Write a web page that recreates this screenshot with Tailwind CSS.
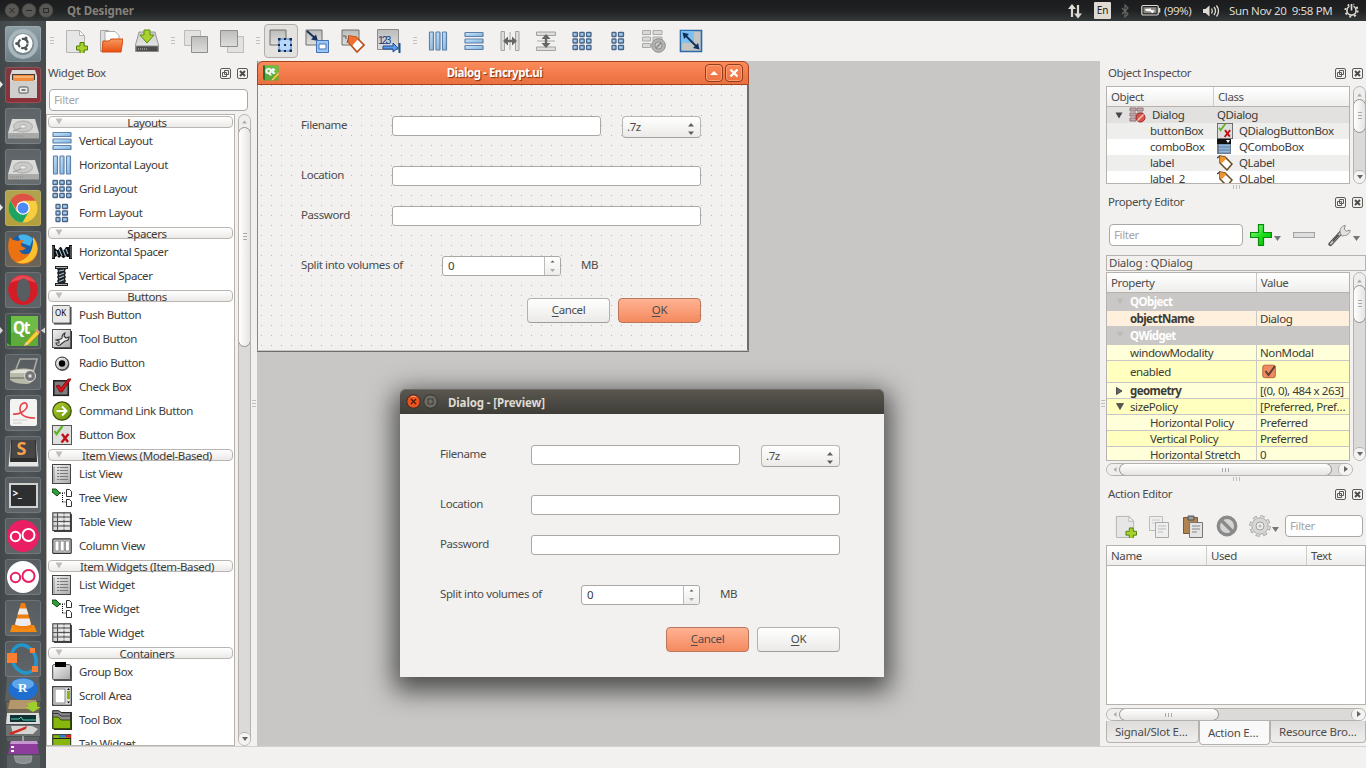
<!DOCTYPE html>
<html lang="en">
<head>
<meta charset="utf-8">
<title>Qt Designer</title>
<script src="https://cdn.jsdelivr.net/npm/@tailwindcss/browser@4"></script>
</head>
<body class="w-[1366px] h-[768px] overflow-hidden flex flex-col bg-[#f2f1f0] text-[#4c4c4c] font-['Noto_Sans','Open_Sans',sans-serif] text-[11.5px] leading-4 tracking-[-0.4px] whitespace-nowrap">

<svg class="absolute w-0 h-0">
  <defs>
    <linearGradient id="blue" x1="0" y1="0" x2="1" y2="1"><stop offset="0" stop-color="#cfeaff"/><stop offset="1" stop-color="#79add9"/></linearGradient>
    <linearGradient id="grey" x1="0" y1="0" x2="1" y2="1"><stop offset="0" stop-color="#f4f4f4"/><stop offset="1" stop-color="#a9a9a9"/></linearGradient>
    <linearGradient id="sq" x1="0" y1="0" x2="0" y2="1"><stop offset="0" stop-color="#bcbcba"/><stop offset="1" stop-color="#dededc"/></linearGradient>
    <linearGradient id="org" x1="0" y1="0" x2="0" y2="1"><stop offset="0" stop-color="#f79a5e"/><stop offset="1" stop-color="#ea4f13"/></linearGradient>
    <linearGradient id="grn" x1="0" y1="0" x2="1" y2="1"><stop offset="0" stop-color="#b8d432"/><stop offset="1" stop-color="#5d8a06"/></linearGradient>
    <linearGradient id="plusg" x1="0" y1="0" x2="1" y2="1"><stop offset="0" stop-color="#b4ffa8"/><stop offset=".5" stop-color="#1fe01f"/><stop offset="1" stop-color="#05b305"/></linearGradient>
    <linearGradient id="disk" x1="0" y1="0" x2="0" y2="1"><stop offset="0" stop-color="#c9c9c9"/><stop offset="1" stop-color="#f2f2f2"/></linearGradient>
  </defs>
  <symbol id="i-vbars" viewBox="0 0 20 20"><g fill="url(#blue)" stroke="#5f80a8" stroke-width="1.2"><rect x="1.5" y="1" width="4" height="18" rx=".6"/><rect x="8" y="1" width="4" height="18" rx=".6"/><rect x="14.5" y="1" width="4" height="18" rx=".6"/></g></symbol>
  <symbol id="i-hbars" viewBox="0 0 20 20"><g fill="url(#blue)" stroke="#5f80a8" stroke-width="1.2"><rect x="1" y="1.5" width="18" height="4" rx=".6"/><rect x="1" y="8" width="18" height="4" rx=".6"/><rect x="1" y="14.5" width="18" height="4" rx=".6"/></g></symbol>
  <symbol id="i-grid" viewBox="0 0 20 20"><g fill="url(#blue)" stroke="#4a6488" stroke-width="1.3"><rect x="1" y="1.5" width="4.4" height="4" rx=".6"/><rect x="7.8" y="1.5" width="4.4" height="4" rx=".6"/><rect x="14.6" y="1.5" width="4.4" height="4" rx=".6"/><rect x="1" y="8" width="4.4" height="4" rx=".6"/><rect x="7.8" y="8" width="4.4" height="4" rx=".6"/><rect x="14.6" y="8" width="4.4" height="4" rx=".6"/><rect x="1" y="14.5" width="4.4" height="4" rx=".6"/><rect x="7.8" y="14.5" width="4.4" height="4" rx=".6"/><rect x="14.6" y="14.5" width="4.4" height="4" rx=".6"/></g></symbol>
  <symbol id="i-form" viewBox="0 0 20 20"><g fill="url(#blue)" stroke="#4a6488" stroke-width="1.3"><rect x="4" y="1.5" width="4" height="4" rx=".6"/><rect x="10.5" y="1.5" width="5" height="4" rx=".6"/><rect x="4" y="8" width="4" height="4" rx=".6"/><rect x="10.5" y="8" width="5" height="4" rx=".6"/><rect x="4" y="14.5" width="4" height="4" rx=".6"/><rect x="10.5" y="14.5" width="5" height="4" rx=".6"/></g></symbol>
  <symbol id="i-hspace" viewBox="0 0 20 20"><path d="M0 3h3v3l2 2h1l2-3h1l2 3h1l2-3h1l2 0V3h3v14h-3v-2h-2l-1-1-2 2h-1l-2-2-2 2H7l-2-2-2 1v2H0z" fill="#111"/><path d="M1 4v12M19 4v12" stroke="#888"/><path d="M4 9l2 5M7 7l3 7M10.500 7l3 7M14 7l2 5" stroke="#9cc3d8" stroke-width="1.100"/></symbol>
  <symbol id="i-vspace" viewBox="0 0 20 20"><path d="M3 0h13v3h-2l-1 2 1 2-1 2 1 2-1 2 1 2-1 2h3v3H3v-3h3l-1-2 1-2-1-2 1-2-1-2 1-2-1-2H3z" fill="#222"/><path d="M4 1.500h11M4 18.500h11" stroke="#aaa"/><path d="M7 5l5-1M7 9l5-2M7 12l5-2M7 15.500l5-2" stroke="#9cc3d8" stroke-width="1.200"/></symbol>
  <symbol id="i-push" viewBox="0 0 20 20"><path d="M2 2h17.500v17.500H2z" fill="#333"/><rect x=".5" y=".5" width="17.500" height="17.500" rx="1" fill="#e9e9e9" stroke="#777"/></symbol>
  <symbol id="i-tool" viewBox="0 0 20 20"><path d="M2 2h18v18H2z" fill="#333"/><rect x=".5" y=".5" width="18" height="18" fill="url(#grey)" stroke="#555"/><path d="M4 11c2-1 5 0 6-2 0-2 0-4 3-5l-1 3 2 2 3-1c0 3-2 4-4 4l-5 4c-2 1-4 0-4-2l3 0 0-2z" fill="#eee" stroke="#333" stroke-width="1.100"/></symbol>
  <symbol id="i-radio" viewBox="0 0 20 20"><circle cx="10.500" cy="11" r="7" fill="#777"/><circle cx="10" cy="10.500" r="6.500" fill="url(#grey)" stroke="#333"/><circle cx="10" cy="10.500" r="3.200" fill="#000"/></symbol>
  <symbol id="i-check" viewBox="0 0 20 20"><rect x="1.800" y="3.800" width="14.500" height="14.500" fill="#7e7e7e" stroke="#222" stroke-width="1.600"/><path d="M4 9l3-1 2 3 7-9 3 0-9 13-2 0z" fill="#d8121a" stroke="#7d080c" stroke-width=".8"/></symbol>
  <symbol id="i-cmd" viewBox="0 0 20 20"><circle cx="10" cy="10" r="9.200" fill="url(#grn)" stroke="#40520a" stroke-width="1.300"/><path d="M4.500 10H14M10 5.500l4.500 4.500L10 14.500" fill="none" stroke="#fff" stroke-width="2"/></symbol>
  <symbol id="i-bbox" viewBox="0 0 20 20"><rect x=".5" y=".5" width="19" height="19" fill="#dedede" stroke="#555"/><path d="M2.500 6l2 3 6-8" fill="none" stroke="#5cb522" stroke-width="2.200"/><path d="M10 9l6 8M16.500 9l-7 8.500" stroke="#c01116" stroke-width="2.400"/></symbol>
  <symbol id="i-list" viewBox="0 0 20 20"><rect x=".5" y=".5" width="18" height="19" fill="url(#grey)" stroke="#444"/><path d="M2 2.500v16" stroke="#888"/><path d="M5 3.500h11M5 6.500h11M5 9.500h11M5 12.500h11M5 15.500h11" stroke="#7a7a7a" stroke-dasharray="2 .7 9 1"/></symbol>
  <symbol id="i-tree" viewBox="0 0 20 20"><path d="M0 1l4 0 4 4-3 3-5-4z" fill="#2f9e38" stroke="#0c3d11" stroke-width=".9"/><path d="M8 5h6M10.500 5v9M10.500 14h4" fill="none" stroke="#000" stroke-dasharray="1 1"/><path d="M14.500 1.500h3l2 2v5h-5zM14.500 11.500h3l2 2v5h-5z" fill="#fff" stroke="#333"/></symbol>
  <symbol id="i-table" viewBox="0 0 20 20"><path d="M2 2h18v18H2z" fill="#444"/><rect x=".8" y=".8" width="17.800" height="17.800" fill="#d5d5d5" stroke="#333"/><path d="M5.500 1v17M12 1v17M1 5h17M1 9.500h17M1 14h17" stroke="#555"/><path d="M7 3h10M7 7h10M7 11.700h10M7 16h10" stroke="#f8f8f8"/></symbol>
  <symbol id="i-col" viewBox="0 0 20 20"><rect x=".8" y="2.800" width="18.400" height="14.600" rx="1" fill="#ccc" stroke="#333" stroke-width="1.200"/><path d="M3 5h4v10H3zM8.200 5h4v10h-4zM13.400 5h4v10h-4z" fill="#fff" stroke="#777" stroke-width=".8"/></symbol>
  <symbol id="i-group" viewBox="0 0 20 20"><path d="M2 4h18v15H2z" fill="#555"/><rect x=".7" y="2.700" width="17.800" height="15" rx="1" fill="url(#grey)" stroke="#444"/><rect x="3" y="0" width="11" height="5" fill="#000"/></symbol>
  <symbol id="i-scroll" viewBox="0 0 20 20"><rect x=".7" y=".7" width="18.600" height="18.600" fill="#ddd" stroke="#333" stroke-width="1.200"/><rect x="3" y="3" width="10" height="14" fill="#fff" stroke="#888"/><path d="M15 5h3v8h-3z" fill="#86b80d"/><path d="M15 4l1.500-2L18 4zM15 15.500l1.500 2 1.500-2z" fill="#111"/></symbol>
  <symbol id="i-toolbox" viewBox="0 0 20 20"><path d="M2 2h18v18H2z" fill="#333"/><path d="M.7.7h6l3 2h9v16H.7z" fill="#8b8b8b" stroke="#222"/><path d="M1 7h5l3 3h9.500v8.500H1z" fill="#87b60c" stroke="#375003"/><path d="M1 3.500h5l3 2.500h9" stroke="#333" fill="none"/></symbol>
  <symbol id="i-tab" viewBox="0 0 20 20"><rect x=".7" y=".7" width="18" height="18" fill="#87b60c" stroke="#222"/><path d="M7 1h6v2.500H7z" fill="#2480d8"/><path d="M13.500 1H19v2.500h-5.500z" fill="#d82424"/><path d="M1 4.500h18" stroke="#222"/></symbol>
  <symbol id="i-float" viewBox="0 0 11 11"><rect x=".5" y=".5" width="10" height="10" rx="1.500" fill="none" stroke="#5b5b58"/><path d="M4.500 2.500h4v4h-4zM2.500 4.500h4v4h-4z" fill="#f2f1f0" stroke="#5b5b58"/></symbol>
  <symbol id="i-close" viewBox="0 0 11 11"><rect x=".5" y=".5" width="10" height="10" rx="1.500" fill="none" stroke="#5b5b58"/><path d="M3 3l5 5M8 3l-5 5" stroke="#4a4a48" stroke-width="1.900"/></symbol>
  <symbol id="i-new" viewBox="0 0 24 24"><path d="M2.500 1.500h13l5 5v17h-18z" fill="#e6e6e6" stroke="#b4b4b2"/><path d="M15.500 1.500v5h5z" fill="#fff" stroke="#b4b4b2"/><path d="M16 13.500h4v3.500h3.500v4H20v3.500h-4V21h-3.500v-4H16z" fill="#a9d22c" stroke="#4f8008"/></symbol>
  <symbol id="i-undo-d" viewBox="0 0 24 24"><path d="M.5 1.500h16v15H.5z" fill="#e2e2e0" stroke="#bcbcba"/><path d="M7.500 7.500h16v16h-16z" fill="url(#sq)" stroke="#8e8e8c"/></symbol>
  <symbol id="i-wrench" viewBox="0 0 24 24"><path d="M2.500 21.500l11-12" stroke="#555" stroke-width="4.200" stroke-linecap="round"/><path d="M3 21L13.500 9.500" stroke="#c5c5c5" stroke-width="2" stroke-linecap="round"/><path d="M5 18.500L11 12" stroke="#444" stroke-width="1.400"/><path d="M13 10.500c-1-4 0-7.500 5-8.500l-1 4 2 2 4-1c0 4-4 6-7 5.500l-1 1z" fill="#e2e2e2" stroke="#888"/></symbol>
  <symbol id="i-tag" viewBox="0 0 16 16"><path d="M0 3l3-2" stroke="#333" stroke-width="1.300" fill="none"/><path d="M3 1l5 1 7 7-5 6-7-7z" fill="#fff" stroke="#6b4a23" stroke-width="1.500"/><path d="M3 1l5 1 1 2-4 4-2-1z" fill="#f0942f"/></symbol>
  <symbol id="i-drive" viewBox="0 0 36 36"><path d="M7 11h23l4 14v5H3v-5z" fill="#d9d9d7"/><path d="M3 25h31v5.500H3z" fill="#a9a9a7"/><ellipse cx="18" cy="18.500" rx="9.500" ry="5.500" fill="#c9c9c7" stroke="#aaa"/><ellipse cx="18" cy="18.500" rx="3" ry="1.700" fill="#eee" stroke="#999" stroke-width=".6"/><path d="M8 23l8-3" stroke="#999"/><path d="M5 28h14" stroke="#888" stroke-dasharray="1 1"/></symbol>
  <symbol id="i-qt" viewBox="0 0 36 36"><path d="M2 3h31v30H2z" fill="#5eab3c"/><path d="M2 3h31v15C22 16 12 20 2 20z" fill="#6fbb47"/><path d="M2 3h4v30l-4-3z" fill="#276e2b"/><path d="M21 29l10-11 3 3-10 10-5 2z" fill="#f6d136" stroke="#b98a10" stroke-width=".7"/><path d="M30 17l2-1 3 3-1.500 2z" fill="#ef9a8c"/><path d="M21 29l-2 4 5-2z" fill="#e6d1a8"/></symbol>
</svg>

<!-- top panel -->
<header class="h-[21px] shrink-0 flex items-center bg-linear-to-b from-[#1c1c1d] via-[#1f2122] to-[#36393a] text-[#dfdbd2]">
  <svg class="w-[56px] h-[21px] shrink-0" viewBox="0 0 56 21"><g fill="#595854" stroke="#3e3d3a" stroke-width=".8"><circle cx="12" cy="10.500" r="7"/><circle cx="29" cy="10.500" r="7"/><circle cx="46" cy="10.500" r="7"/></g><path d="M9.500 8l5 5M14.500 8l-5 5M26 10.500h6M43.500 8.500h5v4h-5z" stroke="#2a2a28" fill="none"/></svg>
  <span class="ml-[11px] font-bold text-[#85827b] tracking-[-0.15px]">Qt Designer</span>
  <svg class="ml-auto w-[16px] h-[16px]" viewBox="0 0 16 16"><path d="M5 14V4M11 2v10" stroke="#dfdbd2" stroke-width="2.200"/><path d="M1 6l4-5 4 5zM7 10.500l4 5 4-5z" fill="#dfdbd2"/></svg>
  <span class="ml-[11px] w-[17px] h-[17px] bg-[#dfdbd2] rounded-[1px] text-[#222] text-[10px] leading-[17px] text-center tracking-normal">En</span>
  <svg class="ml-[9px] w-[10px] h-[14px]" viewBox="0 0 10 14"><path d="M2 4l6 6-3 3V1l3 3-6 6" fill="none" stroke="#666663" stroke-width="1.200"/></svg>
  <svg class="ml-[11px] w-[20px] h-[13px]" viewBox="0 0 20 13"><rect x=".8" y="1.500" width="16.500" height="9.500" rx="1.500" fill="none" stroke="#dfdbd2" stroke-width="1.200"/><rect x="2.500" y="3.200" width="13" height="6" fill="#8b8984"/><path d="M18.500 4v4.500" stroke="#dfdbd2" stroke-width="1.600"/><path d="M4 5l6-.5v1.500l4 .5-3 3-1-2-5-.5z" fill="#fff"/></svg>
  <span class="ml-[3px] w-[29px] tracking-[-0.5px]">(99%)</span>
  <svg class="ml-[10px] w-[17px] h-[14px]" viewBox="0 0 17 14"><path d="M0 5h2.500L6.500 1.500v11L2.500 9H0z" fill="#dfdbd2"/><path d="M8.500 4.500q1.500 2.500 0 5M11 3q3 4 0 8M13.500 1.500q4 5.500 0 11" fill="none" stroke="#dfdbd2" stroke-width="1.300"/></svg>
  <span class="ml-[9px] w-[104px] tracking-[-0.36px]">Sun Nov 20&nbsp; 9:58 PM</span>
  <svg class="ml-[11px] mr-[7px] w-[15px] h-[15px]" viewBox="0 0 15 15"><circle cx="7.500" cy="7.500" r="4.600" fill="none" stroke="#dfdbd2" stroke-width="1.600"/><circle cx="7.500" cy="7.500" r="6.200" fill="none" stroke="#dfdbd2" stroke-width="1.800" stroke-dasharray="2 2.870"/><path d="M7.500 0v8" stroke="#1f2122" stroke-width="4"/><path d="M7.500 1v6.500" stroke="#dfdbd2" stroke-width="1.700"/></svg>
</header>

<div class="flex-1 min-h-0 flex">

<!-- launcher -->
<nav class="relative w-[46px] shrink-0 bg-linear-to-r from-[#42474a] via-[#4f5457] to-[#464b4d] flex flex-col items-center gap-[5px] pt-[5px] pr-[1px] overflow-hidden [&>div]:w-[36px] [&>div]:h-[36px] [&>div]:shrink-0 [&>div]:rounded-[3px] [&>div]:shadow-[inset_0_0_0_1px_#ffffff22]">
  <div class="bg-linear-to-b from-[#8fa0a7] to-[#6d7d84]"><svg viewBox="0 0 36 36"><circle cx="18" cy="18" r="13" fill="none" stroke="#a9b6bb" stroke-width="4"/><circle cx="18" cy="17.500" r="9.500" fill="#fff"/><circle cx="18" cy="17.500" r="4.600" fill="none" stroke="#4d5659" stroke-width="2.200" stroke-dasharray="8.300 1.330" transform="rotate(8 18 17.500)"/><g fill="#4d5659"><circle cx="11.800" cy="17.500" r="1.600"/><circle cx="21" cy="12" r="1.600"/><circle cx="21" cy="23" r="1.600"/></g></svg></div>
  <div class="bg-linear-to-b from-[#7d3a40] to-[#8c3039]"><svg viewBox="0 0 36 36"><path d="M7 3h23l2 6v22H5V9z" fill="#d9d9d7"/><path d="M7 7h23v6H7z" fill="#413c37"/><path d="M8 8h21v6H8z" fill="#f28b3c"/><path d="M9 10h19" stroke="#fbd7a8"/><path d="M5 14h27v17H5z" fill="#cfcfcd"/><rect x="14" y="20" width="9" height="6" rx="1" fill="#eee" stroke="#555"/><path d="M16.500 23h4" stroke="#555" stroke-width="1.500"/></svg></div>
  <div class="bg-linear-to-b from-[#5d6366] to-[#686e70]"><svg viewBox="0 0 36 36"><use href="#i-drive"/></svg></div>
  <div class="bg-linear-to-b from-[#5d6366] to-[#686e70]"><svg viewBox="0 0 36 36"><use href="#i-drive"/></svg></div>
  <div class="bg-linear-to-b from-[#b0a351] to-[#b39f3c]"><svg viewBox="0 0 36 36"><circle cx="18" cy="18" r="14.500" fill="#f6cd3c"/><path d="M5.400 10.800A14.500 14.500 0 0 1 30.600 10.800H18L13 22z" fill="#de5246"/><path d="M5.400 10.800A14.500 14.500 0 0 0 17.500 32.500L23.500 22H12z" fill="#1da462"/><circle cx="18" cy="18" r="6.800" fill="#fff"/><circle cx="18" cy="18" r="5.500" fill="#4c8bf5"/></svg></div>
  <div class="bg-linear-to-b from-[#565c5f] to-[#6c6457]"><svg viewBox="0 0 36 36"><circle cx="18" cy="17" r="13.500" fill="#1b5ea8"/><path d="M13 5c5-3 12-1 15 3l-3 7-8-3z" fill="#45b4ea"/><path d="M5 6c-4 9-2 27 13 27 10 0 15-8 15-16-1-5-2-8-5-11 2 6 2 10-1 14-4 5-11 4-13-1 3 1 5 0 7-2-2-1-4-1-5-3 0-3 2-3 3-5-3 0-5 0-6 1-3-1-5 0-8-4z" fill="#ec7211"/><path d="M28 6c6 7 6 17-1 23-5 4-11 4-16 2 9-1 18-8 17-25z" fill="#fbc030"/></svg></div>
  <div class="bg-linear-to-b from-[#565c5f] to-[#5f6568]"><svg viewBox="0 0 36 36"><ellipse cx="18" cy="18" rx="14.800" ry="15" fill="#d41b26"/><path d="M5 11a14.800 15 0 0 1 26 0c-8-4-18-4-26 0z" fill="#ec4450"/><ellipse cx="18.500" cy="18" rx="7" ry="11.500" fill="#575d60"/></svg></div>
  <div class="relative bg-[#4f5456]"><svg viewBox="0 0 36 36"><use href="#i-qt"/></svg><span class="absolute left-[8px] top-[5px] text-white font-bold text-[17px] leading-[20px] tracking-[-1.5px] scale-x-90 origin-left">Qt</span></div>
  <div class="bg-linear-to-b from-[#565c5f] to-[#5f6568]"><svg viewBox="0 0 36 36"><path d="M11 15L15 5h17l-5 18" fill="none" stroke="#a9a9a5" stroke-width="1.600"/><path d="M5 17c8-3 15-3 24-1v9c-2 4-5 5-8 5-6 0-12-1-16-4z" fill="#b9b9aa"/><path d="M5 18c8-3 15-3 22-1l-3 2H6z" fill="#e4e4d8"/><path d="M5 24h15" stroke="#7e7e72" stroke-width="1.500"/><circle cx="25" cy="22" r="5.500" fill="#777" stroke="#ddd"/><circle cx="25" cy="22" r="1.800" fill="#ddd"/></svg></div>
  <div class="bg-linear-to-b from-[#565c5f] to-[#5f6568]"><svg viewBox="0 0 36 36"><rect x="5" y="4" width="27" height="27" rx="2" fill="#f3f3f2"/><path d="M8 19c6 1 15-4 14-9-1-4-7-2-7 4s6 9 15 9" fill="none" stroke="#e3444b" stroke-width="1.600"/><path d="M8 25h14M8 28h9" stroke="#ccc"/></svg></div>
  <div class="relative bg-linear-to-b from-[#565c5f] to-[#5f6568]"><svg viewBox="0 0 36 36"><path d="M6 4h25l2.500 26.500H3.500z" fill="#e5e5e5"/><path d="M6 4h25l1 22H5z" fill="#2e2e2e"/><path d="M7 4h23l.5 18h-24z" fill="#464646"/></svg><span class="absolute left-[12px] top-[1px] text-[#f7a24c] font-bold text-[18px] leading-[22px]">S</span></div>
  <div class="relative bg-linear-to-b from-[#565c5f] to-[#5f6568]"><svg viewBox="0 0 36 36"><rect x="5" y="7" width="27" height="23" fill="#2d2f30" stroke="#d0d0ce" stroke-width="2"/></svg><span class="absolute left-[8px] top-[8px] text-white text-[10px] leading-[16px] font-bold">&gt;_</span></div>
  <div class="bg-linear-to-b from-[#565c5f] to-[#5f6568]"><svg viewBox="0 0 36 36"><circle cx="18" cy="18" r="16" fill="#ea1e63"/><g fill="none" stroke="#fff" stroke-width="2"><circle cx="10.500" cy="18.500" r="4.700"/><circle cx="23.500" cy="17" r="6"/></g></svg></div>
  <div class="bg-linear-to-b from-[#565c5f] to-[#5f6568]"><svg viewBox="0 0 36 36"><circle cx="18" cy="18" r="16" fill="#fff"/><g fill="none" stroke="#ea1e63" stroke-width="2"><circle cx="10.500" cy="18.500" r="4.700"/><circle cx="23.500" cy="17" r="6"/></g></svg></div>
  <div class="bg-linear-to-b from-[#565c5f] to-[#5f6568]"><svg viewBox="0 0 36 36"><path d="M7 25h22l3 7H5z" fill="#f58a13"/><path d="M16 3h4l7 24c-4 3-14 3-18 0z" fill="#f07f12"/><path d="M14.500 8.500h7l2 6h-11zM11.500 18.500h13l1.500 6c-4 2-12 2-16 0z" fill="#ececec"/></svg></div>
  <div class="bg-linear-to-b from-[#565c5f] to-[#5f6568]"><svg viewBox="0 0 36 36"><ellipse cx="19" cy="18" rx="11.500" ry="14.500" fill="none" stroke="#2396cc" stroke-width="3.500" transform="rotate(-28 19 18)"/><g fill="#ff7f32"><path d="M2 12h10v10H2zM25 7h5v5h-5zM27 25h6v6h-6z"/></g></svg></div>
  <!-- folded stack -->
  <svg class="absolute left-[3px] top-[655px] w-[40px] h-[92px]" viewBox="0 0 40 92"><path d="M4 1h32l2 24H2z" fill="#5a6063"/><ellipse cx="20" cy="13" rx="14.500" ry="11" fill="#1f6fd0"/><ellipse cx="20" cy="8" rx="11" ry="5.500" fill="#5ea5ea"/><path d="M3 26h34l-1 12H4z" fill="#6d6655"/><path d="M7 24h26l2 9H5z" fill="#b3976b"/><path d="M24 27h4v-1h6v5h4l-8 5-8-5h4z" fill="#9ccf2b"/><path d="M4 37h32l1 11H3z" fill="#dcdcdc"/><path d="M7 39h26v7H7z" fill="#12302f"/><path d="M8 43h8l2-2 2 3h13" stroke="#4fd4c0" fill="none"/><path d="M3 49h34v11H3z" fill="#6e7273"/><path d="M8 50h21l6 3-5 5H10z" fill="#d4d4d2"/><path d="M6 57l18-7-1 3-15 6z" fill="#cf2b21"/><path d="M4 61h32v4H4z" fill="#5a5f62"/><path d="M20 60v6" stroke="#ddd"/><path d="M8 65h26l2 13H5z" fill="#8e3d9c"/><path d="M8 65h26l1 3H7z" fill="#c795d0"/><path d="M8 70h3v2H8zM8 74h3v2H8z" fill="#fff"/><path d="M4 79h33v13H4z" fill="#5a5f62"/><path d="M11 80h18l-1 6c-5 2-11 2-15 0z" fill="#8a8f90" stroke="#aaa" stroke-width=".7"/></svg>
  <span class="absolute left-[18px] top-[659px] font-bold text-white text-[13px] leading-[16px] font-['Liberation_Serif',serif]">R</span>
  <svg class="absolute left-0 top-[59px] w-[4px] h-[132px]" viewBox="0 0 4 132"><path d="M0 1l3 3.500-3 3.500zM0 124l3 3.500-3 3.500z" fill="#e8e8e8"/></svg>
  <svg class="absolute left-0 top-[305px] w-[46px] h-[9px]" viewBox="0 0 46 9"><path d="M0 1l3 3.500-3 3.500zM45 1.500l-4 3 4 3z" fill="#d8d8d8"/></svg>
</nav>

<div class="flex-1 min-w-0 flex flex-col">
  <!-- toolbar -->
  <div class="h-[40px] shrink-0 flex items-center text-[#bbb] [&>svg]:w-[24px] [&>svg]:h-[24px] [&>svg]:shrink-0">
    <span class="ml-[4px] w-[4px] h-[9px] shrink-0 bg-[repeating-linear-gradient(#c4c2bf_0_1px,transparent_1px_3px)]"></span>
    <svg class="ml-[10px]"><use href="#i-new"/></svg>
    <svg class="ml-[11px]" viewBox="0 0 24 24"><path d="M1.500 1.500h8l2 3h-3v18h-7z" fill="#ddd" stroke="#a9a9a7"/><path d="M6 2.500h10l4 4V15H6z" fill="#fff" stroke="#aaa"/><path d="M4 12h6l2-2h12l-2 13H3z" fill="url(#org)" stroke="#cf4c10"/></svg>
    <svg class="ml-[12px]" viewBox="0 0 24 24"><path d="M4 3h16l3.500 13v6.500H.5V16z" fill="url(#disk)" stroke="#999"/><path d="M1 17h22v5.500H1z" fill="#4b4b4b" stroke="#888"/><path d="M3 20h10" stroke="#ccc" stroke-dasharray="1 1"/><path d="M9 1h6v5h4l-7 8-7-8h4z" fill="#a9d22c" stroke="#5a8d0c"/></svg>
    <span class="ml-[12px] w-[4px] h-[9px] shrink-0 bg-[repeating-linear-gradient(#c4c2bf_0_1px,transparent_1px_3px)]"></span>
    <svg class="ml-[9px]"><use href="#i-undo-d"/></svg>
    <svg class="ml-[12px]" viewBox="0 0 24 24"><path d="M7.500 7.500h16v16h-16z" fill="#e2e2e0" stroke="#bcbcba"/><path d="M.5 1.500h17v16H.5z" fill="url(#sq)" stroke="#8e8e8c"/></svg>
    <span class="ml-[12px] w-[4px] h-[9px] shrink-0 bg-[repeating-linear-gradient(#c4c2bf_0_1px,transparent_1px_3px)]"></span>
    <span class="ml-[4px] w-[34px] h-[34px] shrink-0 rounded-[4px] border border-[#b1afab] bg-[#e4e2df] flex items-center justify-center"><svg class="w-[24px] h-[24px]" viewBox="0 0 24 24"><path d="M1 1h16v15H1z" fill="url(#sq)" stroke="#6f6f6d"/><path d="M10 10h12v12H10z" fill="#b7d8fb" stroke="#4c7dc0"/><g fill="#0e2a55"><path d="M9 9h2.500v2.500H9zM15 9h2v2h-2zM20.500 9H23v2.500h-2.500zM9 15h2v2H9zM21 15h2v2h-2zM9 20.500h2.500V23H9zM15 21h2v2h-2zM20.500 20.500H23V23h-2.500zM15 15h2v2h-2z"/></g></svg></span>
    <svg class="ml-[7px]" viewBox="0 0 24 24"><path d="M1 1h16v15H1z" fill="url(#sq)" stroke="#6f6f6d"/><path d="M2 2l9 8" stroke="#16325c" stroke-width="2"/><path d="M13 12l-7-1.500 5-5z" fill="#16325c"/><path d="M11.500 11.500h12v12h-12z" fill="#9cc6f5" stroke="#4473b5"/><path d="M14 15h7v5h-7z" fill="#fff" stroke="#4473b5"/></svg>
    <svg class="ml-[12px]" viewBox="0 0 24 24"><path d="M1 1h17v15H1z" fill="url(#sq)" stroke="#6f6f6d"/><path d="M2 7h3v3M8 7l-2 7" stroke="#555" fill="none"/><path d="M8 7l7 1 8 8-7 7-8-9z" fill="#fff" stroke="#b94f1b" stroke-width="1.700"/><path d="M8 7l7 1 2 2-6 7-3-4z" fill="#f07030"/></svg>
    <svg class="ml-[12px]" viewBox="0 0 24 24"><path d="M.5.5h21v20H.5z" fill="url(#sq)" stroke="#8b8b89"/><text x="1" y="15" font-size="10.500" fill="#163f86" font-family="Liberation Sans" textLength="13">123</text><path d="M6 17h10v-3l5 5-5 4v-3H6z" fill="#5d9be6" stroke="#1d4d99"/><path d="M22.500 14v10" stroke="#1d4d99" stroke-width="2"/></svg>
    <span class="ml-[12px] w-[4px] h-[9px] shrink-0 bg-[repeating-linear-gradient(#c4c2bf_0_1px,transparent_1px_3px)]"></span>
    <svg class="ml-[9px]" viewBox="-2 -2 24 24"><use href="#i-vbars" width="20" height="20"/></svg>
    <svg class="ml-[12px]" viewBox="-2 -2 24 24"><use href="#i-hbars" width="20" height="20"/></svg>
    <svg class="ml-[12px]" viewBox="0 0 24 24"><path d="M3 2.500h3.500v19H3zM17.500 2.500H21v19h-3.500z" fill="#ddd" stroke="#a2a2a0"/><path d="M12 3v18" stroke="#aaa"/><path d="M7 12h10" stroke="#666" stroke-width="2.400"/><path d="M5 12l5-4.500v9zM19 12l-5-4.500v9z" fill="#666"/></svg>
    <svg class="ml-[12px]" viewBox="0 0 24 24"><path d="M2.500 3h19v3.500h-19zM2.500 18h19v3.500h-19z" fill="#ddd" stroke="#a2a2a0"/><path d="M3 12h18" stroke="#aaa"/><path d="M12 7v10" stroke="#666" stroke-width="2.400"/><path d="M12 5l-4.500 5h9zM12 19l-4.500-5h9z" fill="#666"/></svg>
    <svg class="ml-[12px]" viewBox="-2 -2 24 24"><use href="#i-grid" width="20" height="20"/></svg>
    <svg class="ml-[12px]" viewBox="-2 -2 24 24"><use href="#i-form" width="20" height="20"/></svg>
    <svg class="ml-[12px]" viewBox="0 0 24 24"><g fill="#d9d9d7" stroke="#aaaaa8"><path d="M.5 1.500h8v4h-8zM11 1.500h9v4h-9zM.5 8h8v4h-8zM11 8h9v4h-9zM.5 14.500h8v4h-8z"/></g><circle cx="16.500" cy="16.500" r="6.800" fill="#b4b4b2" stroke="#8d8d8b"/><circle cx="16.500" cy="16.500" r="3.600" fill="#c9c9c7" stroke="#8d8d8b"/><path d="M14 19l5-5" stroke="#8d8d8b" stroke-width="1.600"/></svg>
    <svg class="ml-[13px]" viewBox="0 0 24 24"><path d="M1.500 1.500h21v21h-21z" fill="#c5c5c3" stroke="#2a6ba8" stroke-width="1.600"/><path d="M2 2h13v12H2z" fill="#7ec0f2"/><path d="M5 5l14 14" stroke="#0f335c" stroke-width="1.800"/><path d="M3.500 3.500l6.500 1.500-5 5zM20.500 20.500l-6.500-1.500 5-5z" fill="#0f335c"/></svg>
  </div>

  <div class="h-[685px] shrink-0 flex">
    <!-- widget box -->
    <aside class="w-[211px] shrink-0 flex flex-col">
      <div class="h-[24px] flex items-center pl-[2px] pr-[9px] gap-[6px]"><span class="mr-auto">Widget Box</span><svg class="w-[11px] h-[11px]"><use href="#i-float"/></svg><svg class="w-[11px] h-[11px]"><use href="#i-close"/></svg></div>
      <div class="mt-[4px] ml-[3px] w-[199px] h-[22px] rounded-[4px] border border-[#aaa8a4] bg-white pl-[4px] leading-[20px] text-[#a6a6a6]">Filter</div>
      <div class="mt-[3px] flex h-[632px]">
        <div class="w-[189px] shrink-0 border-y border-r border-l border-[#b6b3af] bg-white overflow-hidden text-[#3c3b37] [&>h3]:mx-[1px] [&>h3]:mt-[2px] [&>h3]:mb-[1px] [&>h3]:h-[12px] [&>h3]:rounded-[4px] [&>h3]:border [&>h3]:border-[#b9b6b2] [&>h3]:bg-linear-to-b [&>h3]:from-white [&>h3]:to-[#ebeae8] [&>h3]:leading-[11px] [&>h3]:text-center [&>h3]:pl-[13px] [&>h3]:relative [&>p]:h-[24px] [&>p]:flex [&>p]:items-center [&>p]:pl-[5px] [&>p]:gap-[7px] [&_p>svg]:w-[20px] [&_p>svg]:h-[20px]">
          <h3 class="!mt-[1px]"><svg class="absolute left-[6px] top-[1px] w-[8px] h-[7px]" viewBox="0 0 8 7"><path d="M.5.5h7L4 6.500z" fill="#c0bdb9"/></svg>Layouts</h3>
          <p><svg><use href="#i-hbars"/></svg>Vertical Layout</p>
          <p><svg><use href="#i-vbars"/></svg>Horizontal Layout</p>
          <p><svg><use href="#i-grid"/></svg>Grid Layout</p>
          <p><svg><use href="#i-form"/></svg>Form Layout</p>
          <h3><svg class="absolute left-[6px] top-[1px] w-[8px] h-[7px]" viewBox="0 0 8 7"><path d="M.5.5h7L4 6.500z" fill="#c0bdb9"/></svg>Spacers</h3>
          <p><svg><use href="#i-hspace"/></svg>Horizontal Spacer</p>
          <p><svg><use href="#i-vspace"/></svg>Vertical Spacer</p>
          <h3><svg class="absolute left-[6px] top-[1px] w-[8px] h-[7px]" viewBox="0 0 8 7"><path d="M.5.5h7L4 6.500z" fill="#c0bdb9"/></svg>Buttons</h3>
          <p class="relative"><svg><use href="#i-push"/></svg><span class="absolute left-[8px] top-[3px] text-[8px] leading-[14px] tracking-normal text-black">OK</span>Push Button</p>
          <p><svg><use href="#i-tool"/></svg>Tool Button</p>
          <p><svg><use href="#i-radio"/></svg>Radio Button</p>
          <p><svg><use href="#i-check"/></svg>Check Box</p>
          <p><svg><use href="#i-cmd"/></svg>Command Link Button</p>
          <p><svg><use href="#i-bbox"/></svg>Button Box</p>
          <h3><svg class="absolute left-[6px] top-[1px] w-[8px] h-[7px]" viewBox="0 0 8 7"><path d="M.5.5h7L4 6.500z" fill="#c0bdb9"/></svg>Item Views (Model-Based)</h3>
          <p><svg><use href="#i-list"/></svg>List View</p>
          <p><svg><use href="#i-tree"/></svg>Tree View</p>
          <p><svg><use href="#i-table"/></svg>Table View</p>
          <p><svg><use href="#i-col"/></svg>Column View</p>
          <h3><svg class="absolute left-[6px] top-[1px] w-[8px] h-[7px]" viewBox="0 0 8 7"><path d="M.5.5h7L4 6.500z" fill="#c0bdb9"/></svg>Item Widgets (Item-Based)</h3>
          <p><svg><use href="#i-list"/></svg>List Widget</p>
          <p><svg><use href="#i-tree"/></svg>Tree Widget</p>
          <p><svg><use href="#i-table"/></svg>Table Widget</p>
          <h3><svg class="absolute left-[6px] top-[1px] w-[8px] h-[7px]" viewBox="0 0 8 7"><path d="M.5.5h7L4 6.500z" fill="#c0bdb9"/></svg>Containers</h3>
          <p><svg><use href="#i-group"/></svg>Group Box</p>
          <p><svg><use href="#i-scroll"/></svg>Scroll Area</p>
          <p><svg><use href="#i-toolbox"/></svg>Tool Box</p>
          <p><svg><use href="#i-tab"/></svg>Tab Widget</p>
        </div>
        <div class="ml-[3px] w-[13px] rounded-[7px] border border-[#b5b2ae] bg-[#dcdad8] flex flex-col items-center overflow-hidden">
          <span class="w-full h-[20px] -mb-[8px] bg-[#efeeec] flex justify-center pt-[5px]"><svg class="w-[5px] h-[4px]" viewBox="0 0 5 4"><path d="M0 3.500L2.500.5 5 3.500z" fill="#aaa"/></svg></span>
          <span class="w-[13px] h-[220px] shrink-0 rounded-[7px] border border-[#94918d] bg-linear-to-r from-white to-[#e6e4e2] flex items-center justify-center"><i class="w-[4px] h-[8px] bg-[repeating-linear-gradient(#aaa_0_1px,transparent_1px_3px)]"></i></span>
          <span class="mt-auto w-full h-[13px] border-t border-[#b5b2ae] rounded-t-[5px] bg-[#f4f3f2] flex justify-center pt-[4px]"><svg class="w-[6px] h-[4px]" viewBox="0 0 6 4"><path d="M0 0h6L3 4z" fill="#666"/></svg></span>
        </div>
        <div class="flex items-center pl-[1px]"><i class="w-[4px] h-[9px] -mt-[52px] bg-[repeating-linear-gradient(#c0beba_0_1px,transparent_1px_3px)]"></i></div>
      </div>
    </aside>

    <!-- form canvas -->
    <main class="relative w-[843px] shrink-0 bg-[#c8c7c6] overflow-hidden text-[#4c4c4c]">
      <section class="absolute left-0 top-0 w-[492px] h-[291px] flex flex-col border-b border-[#6e6d6b] shadow-[inset_1px_0_#8a8886]">
        <div class="h-[24px] shrink-0 rounded-t-[6px] border border-[#a5431d] bg-linear-to-b from-[#fa8b5b] from-0% via-[#f37b4b] via-55% to-[#e97140] flex items-center pl-[4px] pr-[5px] text-white font-bold">
          <span class="relative w-[18px] h-[18px]"><svg class="w-[18px] h-[18px]"><use href="#i-qt"/></svg><b class="absolute left-[3px] top-[1px] text-[9px] leading-[12px] tracking-[-1px]">Qt</b></span>
          <span class="flex-1 text-center pl-[4px] [text-shadow:1px_1px_1px_#7c3313] tracking-[-0.45px]">Dialog - Encrypt.ui</span>
          <span class="w-[18px] h-[18px] rounded-[4px] border border-[#933c1a] shadow-[inset_0_0_0_1px_#ff9d73]"><svg viewBox="0 0 16 16"><path d="M4 10h8L8 6z" fill="#fff"/></svg></span>
          <span class="ml-[2px] w-[18px] h-[18px] rounded-[4px] border border-[#933c1a] shadow-[inset_0_0_0_1px_#ff9d73]"><svg viewBox="0 0 16 16"><path d="M4.500 4.500l7 7M11.500 4.500l-7 7" stroke="#fff" stroke-width="2.300"/></svg></span>
        </div>
        <div class="flex-1 border-x border-b border-r-[#6e6d6b] border-l-[#8a8886] border-b-[#c9c7c5] border-r-2 pl-[43px] pt-[31px] bg-[#f2f1f0] bg-[radial-gradient(circle_at_0.5px_0.5px,#b9b8b6_0.6px,transparent_0.8px)] bg-[length:10px_10px] bg-[position:3px_0px]">
          <div class="flex h-[22px]"><span class="w-[91px] pt-[1px]">Filename</span><i class="w-[209px] h-[20px] rounded-[3px] border border-[#aaa8a4] bg-white"></i><span class="ml-[21px] w-[79px] h-[22px] rounded-[4px] border border-[#b8b6b2] border-b-[#a3a19d] bg-linear-to-b from-white to-[#ebeae8] flex items-center pl-[4px] pr-[6px] justify-between">.7z<svg class="w-[6px] h-[12px] mt-[3px]" viewBox="0 0 6 12"><path d="M0 3.500L3 0l3 3.500zM0 8.500h6L3 12z" fill="#5e5e5c"/></svg></span></div>
          <div class="mt-[28px] flex h-[20px]"><span class="w-[91px] pt-[1px]">Location</span><i class="w-[309px] h-[20px] rounded-[3px] border border-[#aaa8a4] bg-white"></i></div>
          <div class="mt-[20px] flex h-[20px]"><span class="w-[91px] pt-[1px]">Password</span><i class="w-[309px] h-[20px] rounded-[3px] border border-[#aaa8a4] bg-white"></i></div>
          <div class="mt-[30px] flex h-[20px]"><span class="w-[141px] pt-[1px]">Split into volumes of</span><span class="w-[119px] rounded-[3px] border border-[#aaa8a4] bg-white flex justify-between pl-[5px] leading-[18px] text-[#3c3b37]">0<b class="w-[16px] rounded-r-[3px] border-l border-[#bdbbb7] bg-linear-to-b from-white to-[#ececea] flex justify-center items-center"><svg class="w-[5px] h-[12px]" viewBox="0 0 5 12"><path d="M.5 2.500L2.500.5l2 2z" fill="#555"/><path d="M0 9h5l-2.500 3z" fill="#aaa"/></svg></b></span><span class="ml-[20px] pt-[1px]">MB</span></div>
          <div class="mt-[22px] ml-[226px] flex gap-[8px] text-center leading-[22px] [&>span]:w-[83px] [&>span]:h-[25px] [&>span]:rounded-[4px] [&>span]:border">
            <span class="border-[#b3b1ad] border-b-[#9f9d99] bg-linear-to-b from-white to-[#ebeae8]"><u class="underline-offset-2">C</u>ancel</span><span class="border-[#b9775c] bg-linear-to-b from-[#ffb293] to-[#f4895e]"><u class="underline-offset-2">O</u>K</span></div>
        </div>
      </section>

      <section class="absolute left-[143px] top-[328px] w-[484px] h-[288px] flex flex-col rounded-t-[6px] shadow-[0_8px_26px_6px_rgba(0,0,0,0.62)]">
        <div class="h-[25px] shrink-0 rounded-t-[6px] bg-linear-to-b from-[#5a5850] to-[#3e3d38] shadow-[inset_0_1px_#6d6b62] flex items-center pl-[6px]">
          <svg class="w-[34px] h-[16px]" viewBox="0 0 34 16"><circle cx="7.500" cy="7.500" r="6.700" fill="#e95420" stroke="#3a2a22"/><path d="M5 2.800a6 6 0 0 1 5 0" stroke="#f9a27c" fill="none"/><path d="M5 5l5 5M10 5l-5 5" stroke="#4a1d0c" stroke-width="1.200"/><circle cx="24.500" cy="7.500" r="6.700" fill="#6e6c65" stroke="#35342f"/><rect x="22" y="5" width="5" height="5" fill="none" stroke="#3b3a36"/></svg>
          <span class="ml-[8px] pt-[3px] font-bold text-[#dfdbd2] tracking-[-0.12px]">Dialog - [Preview]</span>
        </div>
        <div class="flex-1 pl-[40px] pt-[31px] bg-[#f2f1f0]">
          <div class="flex h-[22px]"><span class="w-[91px] pt-[1px]">Filename</span><i class="w-[209px] h-[20px] rounded-[3px] border border-[#aaa8a4] bg-white"></i><span class="ml-[21px] w-[79px] h-[22px] rounded-[4px] border border-[#b8b6b2] border-b-[#a3a19d] bg-linear-to-b from-white to-[#ebeae8] flex items-center pl-[4px] pr-[6px] justify-between">.7z<svg class="w-[6px] h-[12px] mt-[3px]" viewBox="0 0 6 12"><path d="M0 3.500L3 0l3 3.500zM0 8.500h6L3 12z" fill="#5e5e5c"/></svg></span></div>
          <div class="mt-[28px] flex h-[20px]"><span class="w-[91px] pt-[1px]">Location</span><i class="w-[309px] h-[20px] rounded-[3px] border border-[#aaa8a4] bg-white"></i></div>
          <div class="mt-[20px] flex h-[20px]"><span class="w-[91px] pt-[1px]">Password</span><i class="w-[309px] h-[20px] rounded-[3px] border border-[#aaa8a4] bg-white"></i></div>
          <div class="mt-[30px] flex h-[20px]"><span class="w-[141px] pt-[1px]">Split into volumes of</span><span class="w-[119px] rounded-[3px] border border-[#aaa8a4] bg-white flex justify-between pl-[5px] leading-[18px] text-[#3c3b37]">0<b class="w-[16px] rounded-r-[3px] border-l border-[#bdbbb7] bg-linear-to-b from-white to-[#ececea] flex justify-center items-center"><svg class="w-[5px] h-[12px]" viewBox="0 0 5 12"><path d="M.5 2.500L2.500.5l2 2z" fill="#555"/><path d="M0 9h5l-2.500 3z" fill="#aaa"/></svg></b></span><span class="ml-[20px] pt-[1px]">MB</span></div>
          <div class="mt-[22px] ml-[226px] flex gap-[8px] text-center leading-[22px] [&>span]:w-[83px] [&>span]:h-[25px] [&>span]:rounded-[4px] [&>span]:border">
            <span class="border-[#b9775c] bg-linear-to-b from-[#ffb293] to-[#f4895e]"><u class="underline-offset-2">C</u>ancel</span><span class="border-[#b3b1ad] border-b-[#9f9d99] bg-linear-to-b from-white to-[#ebeae8]"><u class="underline-offset-2">O</u>K</span></div>
        </div>
      </section>
    </main>

    <!-- right docks -->
    <aside class="relative w-[266px] shrink-0 pl-[6px] flex flex-col overflow-hidden">
      <i class="absolute left-[1px] top-[339px] w-[4px] h-[9px] bg-[repeating-linear-gradient(#c0beba_0_1px,transparent_1px_3px)]"></i>
      <div class="h-[24px] flex items-center pl-[2px] pr-[3px] gap-[6px]"><span class="mr-auto">Object Inspector</span><svg class="w-[11px] h-[11px]"><use href="#i-float"/></svg><svg class="w-[11px] h-[11px]"><use href="#i-close"/></svg></div>
      <div class="mt-[1px] flex h-[98px]">
        <div class="w-[244px] shrink-0 border border-[#b6b3af] bg-white overflow-hidden text-[#3c3b37] [&>div]:flex [&>div]:h-[16px] [&>div]:items-center [&>div>span]:w-[107px] [&>div>span]:shrink-0">
          <div class="!h-[20px] bg-linear-to-b from-white to-[#efeeed] border-b border-[#b6b3af] text-[#4c4c4c]"><span class="pl-[4px] border-r border-[#cfcdca] !leading-[19px]">Object</span><span class="pl-[4px]">Class</span></div>
          <div class="bg-[#e2e1e0]"><span class="flex items-center"><svg class="ml-[8px] w-[8px] h-[7px]" viewBox="0 0 8 7"><path d="M.5.5h7L4 6.500z" fill="#444"/></svg><svg class="ml-[6px] mr-[6px] w-[17px] h-[16px]" viewBox="0 0 17 16"><path d="M1 1h6v3H1zM8 1h6v3H8zM1 6h6v3H1zM8 6h6v3H8zM1 11h6v3H1z" fill="#c8a8ac" stroke="#8d7478"/><circle cx="11.500" cy="10.500" r="4.500" fill="#d6564a" stroke="#a3271d"/><path d="M8.500 13.500l6-6" stroke="#f5c9c3" stroke-width="1.500"/></svg>Dialog</span><span class="pl-[3px]">QDialog</span></div>
          <div class="bg-[#eeeeed]"><span class="pl-[43px]">buttonBox</span><svg class="ml-[3px] mr-[6px] w-[16px] h-[16px]"><use href="#i-bbox"/></svg>QDialogButtonBox</div>
          <div><span class="pl-[43px]">comboBox</span><svg class="ml-[3px] mr-[6px] w-[16px] h-[16px]" viewBox="0 0 16 16"><path d="M0 0h14v15H0z" fill="#6b7b8f"/><path d="M0 0h14v5H0z" fill="#111"/><path d="M9 1l4 0-2 3z" fill="#fff"/><path d="M2 6.500h11M2 9.500h11M2 12.500h11" stroke="#8db8e4" stroke-width="2"/></svg>QComboBox</div>
          <div class="bg-[#eeeeed]"><span class="pl-[43px]">label</span><svg class="ml-[3px] mr-[6px] w-[16px] h-[16px]"><use href="#i-tag"/></svg>QLabel</div>
          <div><span class="pl-[43px]">label_2</span><svg class="ml-[3px] mr-[6px] w-[16px] h-[16px]"><use href="#i-tag"/></svg>QLabel</div>
        </div>
        <div class="ml-[3px] w-[13px] rounded-[7px] border border-[#b5b2ae] bg-[#dcdad8] flex flex-col items-center overflow-hidden">
          <span class="w-full h-[18px] -mb-[6px] shrink-0 bg-[#efeeec] flex justify-center pt-[6px]"><svg class="w-[5px] h-[4px]" viewBox="0 0 5 4"><path d="M0 3.500L2.500.5 5 3.500z" fill="#aaa"/></svg></span>
          <span class="w-[13px] h-[34px] shrink-0 rounded-[7px] border border-[#94918d] bg-linear-to-r from-white to-[#e6e4e2] flex items-center justify-center"><i class="w-[4px] h-[8px] bg-[repeating-linear-gradient(#aaa_0_1px,transparent_1px_3px)]"></i></span>
          <span class="mt-auto w-full h-[13px] border-t border-[#b5b2ae] rounded-t-[5px] bg-[#f4f3f2] flex justify-center pt-[4px]"><svg class="w-[6px] h-[4px]" viewBox="0 0 6 4"><path d="M0 0h6L3 4z" fill="#666"/></svg></span>
        </div>
      </div>
      <i class="mt-[1px] ml-[127px] w-[8px] h-[4px] bg-[repeating-linear-gradient(90deg,#c0beba_0_1px,transparent_1px_3px)]"></i>
      <div class="mt-[1px] h-[24px] flex items-center pl-[2px] pr-[3px] gap-[6px]"><span class="mr-auto">Property Editor</span><svg class="w-[11px] h-[11px]"><use href="#i-float"/></svg><svg class="w-[11px] h-[11px]"><use href="#i-close"/></svg></div>
      <div class="mt-[10px] h-[22px] flex items-center">
        <span class="ml-[3px] w-[134px] h-[22px] rounded-[4px] border border-[#aaa8a4] bg-white pl-[4px] leading-[20px] text-[#a6a6a6]">Filter</span>
        <svg class="ml-[7px] w-[22px] h-[22px]" viewBox="0 0 22 22"><path d="M8.500 .6h5v7.900h7.900v5h-7.900v7.900h-5v-7.900H.6v-5h7.900z" fill="url(#plusg)" stroke="#078c07" stroke-width="1.200"/></svg>
        <svg class="ml-[2px] mt-[6px] w-[7px] h-[5px]" viewBox="0 0 7 5"><path d="M0 0h7L3.500 5z" fill="#777"/></svg>
        <svg class="ml-[12px] w-[22px] h-[6px]" viewBox="0 0 22 6"><rect x=".5" y=".5" width="21" height="5" fill="#ddd" stroke="#a3a3a3"/></svg>
        <svg class="ml-[13px] w-[23px] h-[24px]"><use href="#i-wrench"/></svg>
        <svg class="ml-[2px] mt-[6px] w-[7px] h-[5px]" viewBox="0 0 7 5"><path d="M0 0h7L3.500 5z" fill="#777"/></svg>
      </div>
      <div class="mt-[9px] h-[16px] border border-[#b6b3af] pl-[2px] leading-[14px] tracking-[-0.25px]">Dialog : QDialog</div>
      <div class="mt-[1px] flex h-[189px]">
        <div class="w-[244px] shrink-0 border border-[#b6b3af] bg-white overflow-hidden text-[#3c3b37] [&>div]:flex [&>div]:h-[16px] [&>div]:items-stretch [&>div]:border-b [&>div]:border-[#c9c8c6] [&>div]:leading-[16px] [&>div>span]:w-[150px] [&>div>span]:shrink-0 [&>div>span]:border-r [&>div>span]:border-[#c9c8c6] [&>div>span]:mr-[3px]">
          <div class="!h-[20px] bg-linear-to-b from-white to-[#efeeed] !border-[#b6b3af] text-[#4c4c4c] !leading-[20px]"><span class="pl-[4px]">Property</span>&hairsp;Value</div>
          <div class="!h-[18px] bg-[#c9c8c7] text-white font-bold tracking-[-0.6px] !leading-[18px]"><svg class="ml-[9px] mt-[5px] mr-[6px] w-[8px] h-[7px]" viewBox="0 0 8 7"><path d="M.5.5h7L4 6.500z" fill="#bdbbb6"/></svg>QObject</div>
          <div class="!h-[15px] bg-[#ffefdd] !border-0 !leading-[16px]"><span class="pl-[23px] font-bold tracking-[-0.6px]">objectName</span>Dialog</div>
          <div class="!h-[19px] bg-[#c9c8c7] text-white font-bold tracking-[-0.6px] !leading-[19px]"><svg class="ml-[9px] mt-[5px] mr-[6px] w-[8px] h-[7px]" viewBox="0 0 8 7"><path d="M.5.5h7L4 6.500z" fill="#bdbbb6"/></svg>QWidget</div>
          <div class="bg-[#ffffda]"><span class="pl-[23px]">windowModality</span>NonModal</div>
          <div class="!h-[22px] bg-[#ffffbf] !leading-[21px]"><span class="pl-[23px]">enabled</span><svg class="ml-[2px] mt-[3px] w-[15px] h-[15px]" viewBox="0 0 15 15"><rect x=".8" y="1.200" width="12.500" height="12.500" rx="2" fill="#f18a60" stroke="#b5603c"/><path d="M3.500 7l3 4L13 2" fill="none" stroke="#5c4036" stroke-width="2"/></svg></div>
          <div class="bg-[#ffffda]"><span class="flex font-bold tracking-[-0.6px]"><svg class="ml-[9px] mt-[4px] mr-[7px] w-[7px] h-[8px]" viewBox="0 0 7 8"><path d="M.5.500v7L6 4z" fill="#666" stroke="#333" stroke-width=".8"/></svg>geometry</span>[(0, 0), 484 x 263]</div>
          <div class="bg-[#ffffbf]"><span class="flex"><svg class="ml-[9px] mt-[4px] mr-[6px] w-[8px] h-[7px]" viewBox="0 0 8 7"><path d="M.5.5h7L4 6.500z" fill="#555" stroke="#333" stroke-width=".6"/></svg>sizePolicy</span>[Preferred, Pref…</div>
          <div class="bg-[#ffffda]"><span class="pl-[43px]">Horizontal Policy</span>Preferred</div>
          <div class="bg-[#ffffbf]"><span class="pl-[43px]">Vertical Policy</span>Preferred</div>
          <div class="bg-[#ffffda]"><span class="pl-[43px]">Horizontal Stretch</span>0</div>
        </div>
        <div class="ml-[3px] w-[13px] rounded-[7px] border border-[#b5b2ae] bg-[#dcdad8] flex flex-col items-center overflow-hidden">
          <span class="w-full h-[18px] -mb-[6px] shrink-0 bg-[#efeeec] flex justify-center pt-[6px]"><svg class="w-[5px] h-[4px]" viewBox="0 0 5 4"><path d="M0 3.500L2.500.5 5 3.500z" fill="#aaa"/></svg></span>
          <span class="w-[13px] h-[38px] shrink-0 rounded-[7px] border border-[#94918d] bg-linear-to-r from-white to-[#e6e4e2] flex items-center justify-center"><i class="w-[4px] h-[8px] bg-[repeating-linear-gradient(#aaa_0_1px,transparent_1px_3px)]"></i></span>
          <span class="mt-auto w-full h-[13px] border-t border-[#b5b2ae] rounded-t-[5px] bg-[#f4f3f2] flex justify-center pt-[4px]"><svg class="w-[6px] h-[4px]" viewBox="0 0 6 4"><path d="M0 0h6L3 4z" fill="#666"/></svg></span>
        </div>
      </div>
      <div class="mt-[2px] w-[247px] h-[13px] shrink-0 rounded-[7px] border border-[#b5b2ae] bg-[#dcdad8] flex items-center overflow-hidden">
        <span class="w-[18px] h-full -mr-[6px] shrink-0 bg-[#efeeec] pl-[6px] pt-[3px]"><svg class="w-[4px] h-[5px]" viewBox="0 0 4 5"><path d="M3.500 0L.5 2.500l3 2.500z" fill="#aaa"/></svg></span>
        <span class="w-[213px] h-[13px] shrink-0 rounded-[7px] border border-[#94918d] bg-linear-to-b from-white to-[#e6e4e2] flex items-center justify-center"><i class="w-[8px] h-[4px] bg-[repeating-linear-gradient(90deg,#aaa_0_1px,transparent_1px_3px)]"></i></span>
        <span class="ml-auto w-[14px] h-full border-l border-[#b5b2ae] rounded-l-[5px] bg-[#f4f3f2] pl-[5px] pt-[2px]"><svg class="w-[4px] h-[6px]" viewBox="0 0 4 6"><path d="M0 0v6l4-3z" fill="#666"/></svg></span>
      </div>
      <i class="mt-[1px] ml-[127px] w-[8px] h-[4px] shrink-0 bg-[repeating-linear-gradient(90deg,#c0beba_0_1px,transparent_1px_3px)]"></i>
      <div class="mt-[1px] h-[24px] shrink-0 flex items-center pl-[2px] pr-[3px] gap-[6px]"><span class="mr-auto">Action Editor</span><svg class="w-[11px] h-[11px]"><use href="#i-float"/></svg><svg class="w-[11px] h-[11px]"><use href="#i-close"/></svg></div>
      <div class="mt-[8px] h-[24px] shrink-0 flex items-center [&>svg]:shrink-0">
        <svg class="ml-[8px] w-[23px] h-[23px]"><use href="#i-new"/></svg>
        <svg class="ml-[11px] w-[22px] h-[23px]" viewBox="0 0 22 23"><path d="M1.500 1.500h13v14h-13z" fill="#eee" stroke="#bcbcba"/><path d="M4 5h8M4 8h8" stroke="#ccc"/><path d="M7.500 7.500h13v15h-13z" fill="#eee" stroke="#aaaaa8"/><path d="M10 11h8M10 14h8M10 17h5" stroke="#bbb"/></svg>
        <svg class="ml-[12px] w-[22px] h-[23px]" viewBox="0 0 22 23"><path d="M1.500 2.500h14v16h-14z" fill="#b08352" stroke="#7a5a36"/><path d="M6 1h6v4H6z" fill="#999" stroke="#555"/><path d="M7.500 7.500h13v15h-13z" fill="#e4e4e4" stroke="#777"/><path d="M10 11h8M10 14h8M10 17h5" stroke="#888"/></svg>
        <svg class="ml-[12px] w-[22px] h-[22px]" viewBox="0 0 22 22"><circle cx="11" cy="11" r="8.700" fill="#d5d5d4" stroke="#8a8a8a" stroke-width="3.400"/><path d="M5 5l12 12" stroke="#8a8a8a" stroke-width="3.400"/></svg>
        <svg class="ml-[11px] w-[22px] h-[22px]" viewBox="0 0 22 22"><circle cx="11" cy="11" r="9" fill="none" stroke="#a2a2a0" stroke-width="3.600" stroke-dasharray="4 3.070"/><circle cx="11" cy="11" r="8.200" fill="#d7d7d5" stroke="#a9a9a7"/><circle cx="11" cy="11" r="9" fill="none" stroke="#d7d7d5" stroke-width="2" stroke-dasharray="3 4.070" stroke-dashoffset="-.5"/><circle cx="11" cy="11" r="4" fill="#eee" stroke="#a2a2a0"/><circle cx="11" cy="11" r="1.600" fill="#bbb"/></svg>
        <svg class="ml-[1px] mt-[6px] w-[7px] h-[5px]" viewBox="0 0 7 5"><path d="M0 0h7L3.500 5z" fill="#777"/></svg>
        <span class="ml-[6px] w-[78px] h-[22px] rounded-[4px] border border-[#aaa8a4] bg-white pl-[4px] leading-[20px] text-[#a6a6a6]">Filter</span>
      </div>
      <div class="mt-[7px] h-[160px] shrink-0 border border-[#b6b3af] bg-white">
        <div class="h-[20px] flex bg-linear-to-b from-white to-[#efeeed] border-b border-[#b6b3af] leading-[20px]"><span class="w-[100px] pl-[4px] border-r border-[#cfcdca]">Name</span><span class="w-[100px] pl-[4px] border-r border-[#cfcdca]">Used</span><span class="pl-[4px]">Text</span></div>
      </div>
      <div class="mt-[3px] w-[260px] h-[13px] shrink-0 rounded-[7px] border border-[#b5b2ae] bg-[#dcdad8] flex items-center overflow-hidden">
        <span class="w-[18px] h-full -mr-[6px] shrink-0 bg-[#efeeec] pl-[6px] pt-[3px]"><svg class="w-[4px] h-[5px]" viewBox="0 0 4 5"><path d="M3.500 0L.5 2.500l3 2.500z" fill="#aaa"/></svg></span>
        <span class="w-[100px] h-[13px] shrink-0 rounded-[7px] border border-[#94918d] bg-linear-to-b from-white to-[#e6e4e2] flex items-center justify-center"><i class="w-[8px] h-[4px] bg-[repeating-linear-gradient(90deg,#aaa_0_1px,transparent_1px_3px)]"></i></span>
        <span class="ml-auto w-[14px] h-full border-l border-[#b5b2ae] rounded-l-[5px] bg-[#f4f3f2] pl-[5px] pt-[2px]"><svg class="w-[4px] h-[6px]" viewBox="0 0 4 6"><path d="M0 0v6l4-3z" fill="#666"/></svg></span>
      </div>
      <div class="flex items-start h-[25px] shrink-0 tracking-[-0.25px]">
        <span class="w-[93px] h-[22px] border-x border-b border-[#b6b3af] rounded-b-[4px] bg-linear-to-b from-[#dfdddb] to-[#efeeec] pl-[8px] leading-[21px]">Signal/Slot E…</span>
        <span class="w-[71px] h-[24px] border-x border-b border-[#b6b3af] rounded-b-[4px] bg-[#faf9f9] pl-[8px] leading-[23px]">Action E…</span>
        <span class="w-[96px] h-[22px] border-x border-b border-[#b6b3af] rounded-b-[4px] bg-linear-to-b from-[#dfdddb] to-[#efeeec] pl-[8px] leading-[21px]">Resource Bro…</span>
      </div>
    </aside>
  </div>
  <footer class="flex-1 border-t border-[#d3d1cf] bg-[#f2f1f0]"></footer>
</div>
</div>
</body>
</html>
